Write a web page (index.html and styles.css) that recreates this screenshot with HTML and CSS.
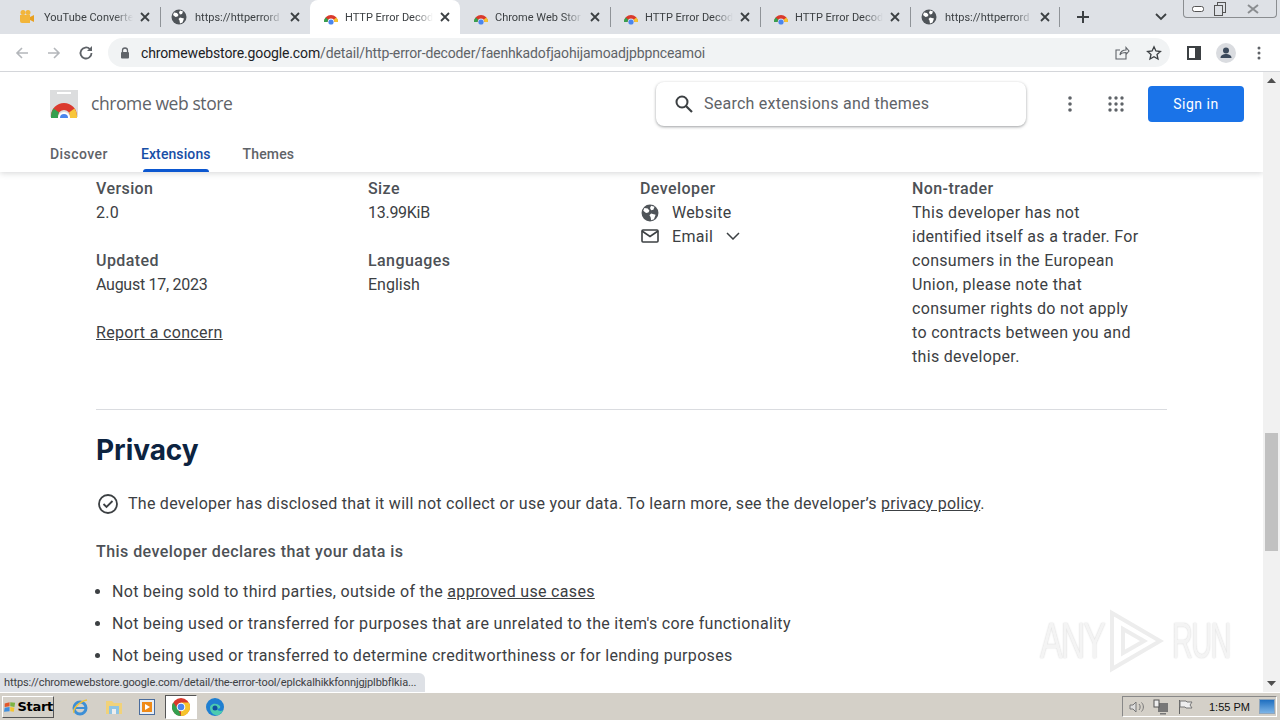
FILE: index.html
```html
<!DOCTYPE html>
<html lang="en">
<head>
<meta charset="utf-8">
<title>HTTP Error Decoder</title>
<link rel="stylesheet" href="styles.css">
</head>
<body>
<svg class="defs" width="0" height="0">
  <defs>
    <symbol id="rainbow" viewBox="0 0 16 16">
      <path d="M1 13a7 7 0 0 1 14 0h-3.5a3.5 3.5 0 0 0-7 0z" fill="#d9392c"/>
      <path d="M1 13a7 7 0 0 1 1.6-4.4l2.8 2.2a3.5 3.5 0 0 0-.9 2.200z" fill="#34a04f"/>
      <path d="M15 13a7 7 0 0 0-1.600-4.400l-2.800 2.200a3.500 3.500 0 0 1 .9 2.200z" fill="#f6c42c"/>
      <circle cx="8" cy="13" r="2.600" fill="#4a86ee"/>
    </symbol>
    <symbol id="globe" viewBox="0 0 16 16">
      <circle cx="8" cy="8" r="7.500" fill="#4f5459"/>
      <path d="M3 3.500l3 .5 1.500 2-1 1.500-2 .5-2.500-2zM9 1.500l3 1-1 2.500-2 .5-1-2zM9 8.500l4 1-1.500 4-2.500 1-.5-3-1-1.500z" fill="#fff"/>
    </symbol>
    <symbol id="x" viewBox="0 0 12 12">
      <path d="M2 2l8 8M10 2l-8 8" stroke="#3c4043" stroke-width="1.800" fill="none"/>
    </symbol>
  </defs>
</svg>
<div class="screen">
  <div class="tabstrip">
    <div class="tab"><svg class="fav fav-first" viewBox="0 0 16 16"><path d="M1 6h10v8H3a2 2 0 0 1-2-2z" fill="#f2b53a"/><circle cx="4" cy="3.500" r="2.500" fill="#f2b53a"/><circle cx="9" cy="3.500" r="2.500" fill="#f2b53a"/><path d="M11 8l4-2v7l-4-2z" fill="#e8a020"/></svg><span class="tab-title">YouTube Converte</span><svg class="tab-x"><use href="#x"/></svg></div>
    <div class="tab sep"><svg class="fav"><use href="#globe"/></svg><span class="tab-title">https://httperrord</span><svg class="tab-x"><use href="#x"/></svg></div>
    <div class="tab active"><svg class="fav fav-r"><use href="#rainbow"/></svg><span class="tab-title">HTTP Error Decod</span><svg class="tab-x"><use href="#x"/></svg></div>
    <div class="tab"><svg class="fav fav-r"><use href="#rainbow"/></svg><span class="tab-title">Chrome Web Stor</span><svg class="tab-x"><use href="#x"/></svg></div>
    <div class="tab sep"><svg class="fav fav-r"><use href="#rainbow"/></svg><span class="tab-title">HTTP Error Decod</span><svg class="tab-x"><use href="#x"/></svg></div>
    <div class="tab sep"><svg class="fav fav-r"><use href="#rainbow"/></svg><span class="tab-title">HTTP Error Decod</span><svg class="tab-x"><use href="#x"/></svg></div>
    <div class="tab sep"><svg class="fav"><use href="#globe"/></svg><span class="tab-title">https://httperrord</span><svg class="tab-x"><use href="#x"/></svg></div>
    <div class="newtab sep"><svg width="14" height="14" viewBox="0 0 14 14"><path d="M7 1v12M1 7h12" stroke="#3c4043" stroke-width="2"/></svg></div>
    <svg class="tablist" width="12" height="8" viewBox="0 0 12 8"><path d="M1 1l5 5 5-5" stroke="#3c4043" stroke-width="1.800" fill="none"/></svg>
    <div class="winctl">
      <span class="winbtn"><svg width="12" height="6" viewBox="0 0 12 6"><rect x=".5" y=".5" width="11" height="5" rx="2" fill="#fff" stroke="#555"/></svg></span>
      <span class="winbtn narrow"><svg width="12" height="14" viewBox="0 0 12 14"><rect x="3.500" y=".5" width="8" height="10" fill="none" stroke="#555"/><rect x=".5" y="3.500" width="8" height="10" fill="#dee1e6" stroke="#555"/></svg></span>
      <span class="winbtn wide"><svg width="12" height="10" viewBox="0 0 12 10"><path d="M1 1l10 8M11 1L1 9" stroke="#8a8d90" stroke-width="2" fill="none"/></svg></span>
    </div>
  </div>

  <div class="toolbar">
    <svg class="navicon" viewBox="0 0 16 16"><path d="M14 8H3M8 3L3 8l5 5" stroke="#b4b7bb" stroke-width="1.600" fill="none"/></svg>
    <svg class="navicon" viewBox="0 0 16 16"><path d="M2 8h11M8 3l5 5-5 5" stroke="#b4b7bb" stroke-width="1.600" fill="none"/></svg>
    <svg class="navicon" viewBox="0 0 16 16"><path d="M13.500 8a5.500 5.500 0 1 1-1.600-3.900" stroke="#5f6368" stroke-width="1.800" fill="none"/><path d="M14 1v5H9z" fill="#5f6368"/></svg>
    <div class="omnibox">
      <svg class="lock" width="10" height="12" viewBox="0 0 10 12"><path d="M2.500 5V3.500a2.500 2.500 0 0 1 5 0V5" stroke="#5f6368" stroke-width="1.300" fill="none"/><rect x="1" y="5" width="8" height="6.500" rx="1" fill="#5f6368"/></svg>
      <span class="url"><span class="url-host">chromewebstore.google.com</span>/detail/http-error-decoder/faenhkadofjaohijamoadjpbpnceamoi</span>
      <svg class="omni-share" width="16" height="16" viewBox="0 0 16 16"><path d="M12 9.500V14H2V5h4M6 10c0-3.500 3-5 6-5V2.500L15 6l-3 3.500V7.500c-3 0-5 .5-6 2.500z" stroke="#5f6368" stroke-width="1.100" fill="none"/></svg>
      <svg class="omni-star" width="16" height="16" viewBox="0 0 16 16"><path d="M8 1.800l1.900 4.200 4.500.5-3.400 3 1 4.500L8 11.700 4 14l1-4.500-3.400-3 4.500-.5z" stroke="#3c4043" stroke-width="1.300" fill="none"/></svg>
    </div>
    <svg class="sidepanel" width="14" height="14" viewBox="0 0 14 14"><rect x="1" y="1" width="12" height="12" fill="#fff" stroke="#3c4043" stroke-width="2"/><rect x="8" y="1" width="5" height="12" fill="#3c4043"/></svg>
    <svg class="avatar" width="20" height="20" viewBox="0 0 20 20"><circle cx="10" cy="10" r="10" fill="#dadce0"/><circle cx="10" cy="7.500" r="3" fill="#3c4a5c"/><path d="M4.500 15c0-3 3-4 5.500-4s5.500 1 5.500 4z" fill="#3c4a5c"/></svg>
    <svg class="kebab" width="4" height="14" viewBox="0 0 4 14"><circle cx="2" cy="2" r="1.500" fill="#5f6368"/><circle cx="2" cy="7" r="1.500" fill="#5f6368"/><circle cx="2" cy="12" r="1.500" fill="#5f6368"/></svg>
  </div>

  <div class="viewport">
    <div class="page">
      <header class="store-header">
        <div class="header-top">
          <svg class="store-logo" width="30" height="28" viewBox="0 0 30 28">
            <path d="M1 0h28v27H1z" fill="#dcddde"/><rect x="8" y="2" width="14" height="2" fill="#fff"/>
            <path d="M2 26a13 13 0 0 1 26 0h-7a6 6 0 0 0-12 0z" fill="#db3a2e"/>
            <path d="M2 26v2h7v-2a6 6 0 0 1 1-3.500l-5.500-4A13 13 0 0 0 2 26z" fill="#34a04f"/>
            <path d="M28 26v2h-7v-2a6 6 0 0 0-1-3.500l5.500-4A13 13 0 0 1 28 26z" fill="#f8c63a"/>
            <path d="M9 28a6 6 0 0 1 12 0z" fill="#fff"/><path d="M11 28a4 4 0 0 1 8 0z" fill="#4a86ee"/>
          </svg>
          <span class="store-name">chrome web store</span>
          <div class="search">
            <svg width="20" height="20" viewBox="0 0 20 20"><circle cx="8" cy="8" r="5.500" stroke="#3c4043" stroke-width="2" fill="none"/><path d="M12 12l6 6" stroke="#3c4043" stroke-width="2.200"/></svg>
            <span class="search-text">Search extensions and themes</span>
          </div>
          <svg class="hdr-kebab" width="4" height="16" viewBox="0 0 4 16"><circle cx="2" cy="2" r="1.800" fill="#5f6368"/><circle cx="2" cy="8" r="1.800" fill="#5f6368"/><circle cx="2" cy="14" r="1.800" fill="#5f6368"/></svg>
          <svg class="hdr-apps" width="16" height="16" viewBox="0 0 16 16" fill="#5f6368"><circle cx="2" cy="2" r="1.700"/><circle cx="8" cy="2" r="1.700"/><circle cx="14" cy="2" r="1.700"/><circle cx="2" cy="8" r="1.700"/><circle cx="8" cy="8" r="1.700"/><circle cx="14" cy="8" r="1.700"/><circle cx="2" cy="14" r="1.700"/><circle cx="8" cy="14" r="1.700"/><circle cx="14" cy="14" r="1.700"/></svg>
          <button class="signin">Sign in</button>
        </div>
        <nav class="store-nav">
          <span class="nav-item">Discover</span>
          <span class="nav-item current">Extensions</span>
          <span class="nav-item themes">Themes</span>
        </nav>
      </header>

      <main class="content">
        <section class="details">
          <div class="col">
            <div class="field"><div class="label">Version</div><div>2.0</div></div>
            <div class="field"><div class="label">Updated</div><div class="tight">August 17, 2023</div></div>
            <a class="link">Report a concern</a>
          </div>
          <div class="col">
            <div class="field"><div class="label">Size</div><div class="tight">13.99KiB</div></div>
            <div class="field"><div class="label">Languages</div><div class="plain">English</div></div>
          </div>
          <div class="col">
            <div class="label">Developer</div>
            <div class="dev-row"><svg width="18" height="18"><use href="#globe"/></svg><span>Website</span></div>
            <div class="dev-row"><svg class="mail" width="18" height="16" viewBox="0 0 18 16"><rect x="1" y="2" width="16" height="12" rx="1" fill="none" stroke="#3c4043" stroke-width="1.600"/><path d="M1 3l8 5.500L17 3" fill="none" stroke="#3c4043" stroke-width="1.600"/></svg><span>Email</span><svg class="email-chev" width="14" height="8" viewBox="0 0 14 8"><path d="M1 1l6 6 6-6" stroke="#3c4043" stroke-width="1.500" fill="none"/></svg></div>
          </div>
          <div class="col">
            <div class="label">Non-trader</div>
            <div class="trader">This developer has not identified itself as a trader. For consumers in the European Union, please note that consumer rights do not apply to contracts between you and this developer.</div>
          </div>
        </section>
        <hr class="rule">
        <h2 class="privacy-title">Privacy</h2>
        <div class="disclosed">
          <svg width="24" height="24" viewBox="0 0 24 24"><circle cx="12" cy="12" r="9" fill="none" stroke="#3c4043" stroke-width="1.800"/><path d="M7.500 12l3 3 6-6" fill="none" stroke="#3c4043" stroke-width="1.800"/></svg>
          <span>The developer has disclosed that it will not collect or use your data. To learn more, see the developer’s <a class="link">privacy policy</a>.</span>
        </div>
        <p class="declares">This developer declares that your data is</p>
        <ul class="uses">
          <li>Not being sold to third parties, outside of the <a class="link">approved use cases</a></li>
          <li>Not being used or transferred for purposes that are unrelated to the item's core functionality</li>
          <li>Not being used or transferred to determine creditworthiness or for lending purposes</li>
        </ul>
      </main>

      <div class="watermark" aria-label="ANY RUN">
        <span class="wm-text">ANY</span>
        <svg width="56" height="64" viewBox="0 0 56 64"><path d="M4 4l48 28-48 28zM15 20v24l21-12z" fill="none" stroke="#ededed" stroke-width="4"/></svg>
        <span class="wm-text wm-run">RUN</span>
      </div>
      <div class="status-bubble">https://chromewebstore.google.com/detail/the-error-tool/eplckalhikkfonnjgjplbbflkia...</div>
    </div>

    <div class="scrollbar">
      <svg width="9" height="5" viewBox="0 0 9 5"><path d="M4.500 0L9 5H0z" fill="#505050"/></svg>
      <div class="scroll-track"><div class="scroll-thumb"></div></div>
      <svg width="9" height="5" viewBox="0 0 9 5"><path d="M0 0h9L4.500 5z" fill="#505050"/></svg>
    </div>
  </div>

  <footer class="taskbar">
    <button class="start">
      <svg width="18" height="16" viewBox="0 0 18 16"><path d="M1 3l7-2v6l-7 1z" fill="#e2582a"/><path d="M9 1l7 1-1 6-6-1z" fill="#7cb342"/><path d="M1 9l7-1v6l-8 1z" fill="#3e8ede"/><path d="M9 8l6 1-1 6-5-1z" fill="#f6c42c"/></svg>
      <span>Start</span>
    </button>
    <div class="quick">
      <span class="qi"><svg width="18" height="18" viewBox="0 0 18 18"><circle cx="9" cy="10" r="6" fill="none" stroke="#3d8fd6" stroke-width="3"/><path d="M3 10h12" stroke="#3d8fd6" stroke-width="2"/><path d="M3 15C1 11 9 3 16 2" stroke="#f0c23a" stroke-width="1.500" fill="none"/></svg></span>
      <span class="qi"><svg width="18" height="16" viewBox="0 0 18 16"><path d="M1 2h6l2 2h8v11H1z" fill="#f1d27a"/><rect x="4" y="7" width="10" height="8" fill="#8fc4e4"/><rect x="7" y="10" width="4" height="5" fill="#eee"/></svg></span>
      <span class="qi"><svg width="16" height="16" viewBox="0 0 16 16"><rect x=".5" y=".5" width="15" height="15" fill="#e8eef5" stroke="#4a6c9c"/><rect x="3" y="3" width="10" height="10" fill="#ef8a17"/><path d="M6 5l5 3-5 3z" fill="#fff"/></svg></span>
      <span class="qi pressed"><svg width="18" height="18" viewBox="0 0 18 18"><circle cx="9" cy="9" r="9" fill="#d9392c"/><path d="M9 18a9 9 0 0 1-7.800-13.500L6 11z" fill="#34a04f"/><path d="M9 18a9 9 0 0 0 7.800-13.500H9z" fill="#f6c42c"/><circle cx="9" cy="9" r="4.300" fill="#fff"/><circle cx="9" cy="9" r="3.300" fill="#4a86ee"/></svg></span>
      <span class="qi"><svg width="18" height="18" viewBox="0 0 18 18"><circle cx="9" cy="9" r="9" fill="#1f7fd1"/><path d="M4 10c0-4 6-6 10-2 1 2-1 3-3 2.500 1 3 4 3 6 1.500-1 4-5 6-8 5-3-1-5-4-5-7z" fill="#4ccbb0"/><circle cx="9" cy="10" r="2.500" fill="#0f4fa0"/></svg></span>
    </div>
    <div class="tray">
      <svg width="16" height="16" viewBox="0 0 16 16"><path d="M1 6h3l3-3v10l-3-3H1z" fill="#ddd" stroke="#777"/><path d="M10 5c1.500 1.500 1.500 4.500 0 6M12.500 3.500c2.500 2.500 2.500 6.500 0 9" stroke="#777" fill="none"/></svg>
      <svg width="16" height="16" viewBox="0 0 16 16"><rect x="5" y="4" width="10" height="9" fill="#777"/><rect x="1" y="1" width="5" height="7" fill="#eee" stroke="#555"/><rect x="7" y="14" width="6" height="1.500" fill="#777"/></svg>
      <svg width="16" height="16" viewBox="0 0 16 16"><path d="M2.500 1v14" stroke="#666"/><path d="M3 2h6l1 1h5l-2 3 2 3H9L8 8H3z" fill="#eee" stroke="#777"/></svg>
      <span class="clock">1:55 PM</span>
      <span class="desktop-btn"></span>
    </div>
  </footer>
</div>
</body>
</html>
```
FILE: styles.css
```css
* { box-sizing: border-box; }
html, body { margin: 0; padding: 0; }
body { font-family: Roboto, "Liberation Sans", sans-serif; color: #3c4043; background: #fff; }
.defs { position: absolute; }
.screen { width: 1280px; height: 720px; display: flex; flex-direction: column; overflow: hidden; }

/* tab strip */
.tabstrip { height: 34px; flex: none; background: #dee1e6; display: flex; align-items: center; padding-left: 10px; position: relative; }
.tab { width: 150px; height: 34px; flex: none; display: flex; align-items: center; padding: 0 9px 0 10px; position: relative; font-size: 11px; color: #3c4043; border-left: 1px solid transparent; }
.tab.sep::before, .newtab.sep::before { content: ""; position: absolute; left: -1px; top: 7px; height: 20px; width: 1px; background: #8f9398; }
.tab.active { background: #fff; border-radius: 8px 8px 0 0; height: 34px; }
.tab.active + .tab::before { display: none; }
.fav { width: 16px; height: 16px; flex: none; }
.fav-first { margin-left: -2px; margin-right: 1px; }
.fav-r { margin-left: 2px; margin-right: -2px; }
.tab-title { flex: 1; margin-left: 8px; white-space: nowrap; min-width: 0; -webkit-mask-image: linear-gradient(90deg, #000 78%, transparent); mask-image: linear-gradient(90deg, #000 78%, transparent); }
.tab-x { width: 12px; height: 12px; flex: none; margin-left: 6px; }
.newtab { width: 46px; height: 34px; position: relative; display: flex; align-items: center; justify-content: center; flex: none; }
.tablist { margin-left: 49px; flex: none; }
.winctl { margin-left: 16px; align-self: flex-start; height: 18px; display: flex; border: 1px solid #8a8d90; border-top: 0; border-radius: 0 0 4px 4px; flex: none; }
.winbtn { width: 27px; display: flex; align-items: center; justify-content: center; }
.winbtn.narrow { width: 18px; }
.winbtn.wide { width: 47px; }

/* toolbar */
.toolbar { height: 38px; flex: none; background: #fff; border-bottom: 1px solid #d4d6da; display: flex; align-items: center; padding-left: 14px; }
.navicon { width: 16px; height: 16px; flex: none; margin-right: 16px; }
.omnibox { width: 1062px; height: 29px; margin-left: -2px; background: #f1f3f4; border-radius: 15px; display: flex; align-items: center; padding: 0 0 0 12px; flex: none; }
.lock { flex: none; }
.url { margin-left: 11px; font-size: 14px; color: #5f6368; white-space: nowrap; flex: 1; letter-spacing: -.13px; }
.url-host { color: #202124; }
.omni-share { flex: none; margin-right: 16px; }
.omni-star { flex: none; margin-right: 8px; }
.sidepanel { flex: none; margin-left: 17px; }
.avatar { flex: none; margin-left: 15px; }
.kebab { flex: none; margin-left: 21px; }

/* viewport */
.viewport { flex: 1; min-height: 0; display: flex; }
.page { flex: 1; min-width: 0; position: relative; overflow: hidden; }
.scrollbar { width: 17px; flex: none; background: #f1f1f1; display: flex; flex-direction: column; align-items: center; padding: 6px 0; }
.scroll-track { flex: 1; width: 100%; padding-top: 350px; }
.scroll-thumb { height: 118px; margin: 0 2px; width: 13px; background: #c1c1c1; }

/* store header */
.store-header { height: 100px; background: #fff; box-shadow: 0 1px 6px rgba(60,64,67,.22); position: relative; padding: 0 20px 0 49px; }
.header-top { height: 63px; display: flex; align-items: center; }
.store-logo { flex: none; }
.store-name { font-size: 17.5px; color: #5f6368; margin: 0 0 2px 12px; width: 565px; flex: none; font-family: "Open Sans", Roboto, sans-serif; letter-spacing: -.42px; }
.search { width: 370px; height: 44px; margin-top: 1px; flex: none; background: #fff; border-radius: 8px; box-shadow: 0 1px 3px rgba(60,64,67,.5); display: flex; align-items: center; padding-left: 18px; }
.search-text { margin-left: 10px; padding-bottom: 2px; font-size: 16px; color: #5f6368; letter-spacing: .25px; }
.hdr-kebab { margin-left: 42px; flex: none; }
.hdr-apps { margin-left: 36px; flex: none; }
.signin { margin-left: 24px; width: 96px; height: 36px; background: #1a73e8; color: #fff; border: 0; border-radius: 4px; font: 400 14px Roboto, sans-serif; letter-spacing: .5px; flex: none; }
.store-nav { display: flex; gap: 33px; height: 37px; padding-left: 1px; font-size: 14px; color: #5f6368; font-weight: 500; }
.nav-item { position: relative; line-height: 38px; letter-spacing: .45px; }
.nav-item.current { color: #174ea6; letter-spacing: .1px; }
.nav-item.themes { letter-spacing: .15px; margin-left: -1px; }
.nav-item.current::after { content: ""; position: absolute; left: 2px; right: 2px; bottom: 0; height: 3px; background: #0b57d0; border-radius: 3px 3px 0 0; }

/* content */
.content { padding: 5px 96px 0; font-size: 16px; line-height: 24px; color: #3c4043; letter-spacing: .32px; }
.details { display: grid; grid-template-columns: repeat(4, 272px); }
.field { margin-bottom: 24px; }
.label { color: #4d5156; font-weight: 500; letter-spacing: .42px; }
.tight { letter-spacing: -.27px; }
.plain { letter-spacing: 0; }
.link { text-decoration: underline; color: #3c4043; }
.dev-row { display: flex; align-items: center; height: 24px; }
.dev-row svg:first-child { flex: none; margin-right: 13px; margin-left: 1px; }
.dev-row svg.mail { margin-bottom: 2px; }
.email-chev { margin: 0 0 2px 13px; }
.trader { width: 232px; }
.rule { border: 0; border-top: 1px solid #dadce0; margin: 40px 0 0; }
.privacy-title { margin: 20px 0 0; font: 700 28px/40px Inter, sans-serif; color: #0c2340; letter-spacing: -.05px; }
.disclosed { display: flex; align-items: center; gap: 8px; margin-top: 22px; height: 24px; letter-spacing: .265px; }
.disclosed svg { flex: none; }
.declares { margin: 24px 0 0; color: #4d5156; font-weight: 500; letter-spacing: .44px; }
.uses { margin: 16px 0 0; padding: 0 0 0 16px; }
.uses li { height: 24px; margin-bottom: 8px; }

/* overlays */
.watermark { position: absolute; left: 1040px; top: 537px; width: 192px; height: 64px; display: flex; align-items: center; gap: 8px; font: 400 50px/64px "Liberation Sans", sans-serif; color: #f4f4f4; letter-spacing: -3px; text-shadow: 0 0 2px #cfcfcf; }
.watermark svg { flex: none; }
.wm-text { width: 60px; flex: none; transform: scaleX(.68); transform-origin: left center; white-space: nowrap; }
.wm-text.wm-run { transform: scaleX(.58); }
.status-bubble { position: absolute; left: 0; bottom: 0; height: 19px; width: 425px; background: #dee1e6; border-radius: 0 6px 0 0; font-size: 11px; line-height: 20px; padding-left: 4px; color: #3c4043; white-space: nowrap; letter-spacing: -.11px; }

/* taskbar */
.taskbar { height: 28px; flex: none; background: #d4d0c8; border-top: 1px solid #fff; display: flex; align-items: center; padding: 0 3px 0 2px; font-family: "Liberation Sans", sans-serif; }
.start { width: 52px; height: 22px; background: #d4d0c8; border: 1px solid; border-color: #fff #555 #555 #fff; display: flex; align-items: center; padding: 0 0 0 1px; font: 700 13px "DejaVu Sans", sans-serif; color: #000; }
.start span { margin-left: 1px; letter-spacing: -.3px; }
.quick { display: flex; align-items: center; margin-left: 9px; }
.qi { width: 33.75px; height: 24px; display: flex; align-items: center; justify-content: center; }
.qi.pressed { background: #fff; border: 1px solid; border-color: #555 #fff #fff #555; width: 31.75px; margin: 0 1px; }
.tray { margin-left: auto; width: 155px; height: 21px; display: flex; align-items: center; gap: 8px; padding-left: 6px; border: 1px solid; border-color: #888 #fff #fff #888; }
.clock { font-size: 11px; margin-left: 8px; color: #111; white-space: nowrap; }
.desktop-btn { width: 16px; height: 15px; margin-left: auto; margin-right: 1px; background: linear-gradient(#1f6fc0, #7db4e6); border: 1px solid #8fa6bd; }
```
